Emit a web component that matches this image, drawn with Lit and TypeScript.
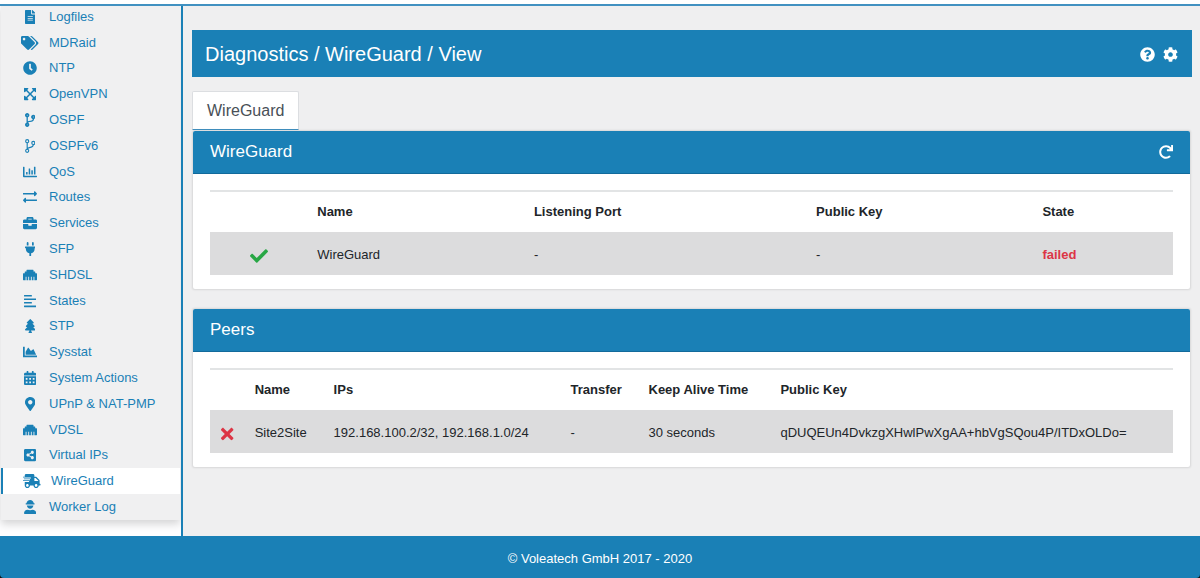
import { LitElement, html, svg, css } from "lit";
import { customElement, property } from "lit/decorators.js";
import { classMap } from "lit/directives/class-map.js";

type Icon = { w: number; d?: string; art?: unknown };

const ICONS: Record<string, Icon> = {
  file: {
    w: 384,
    d: "M224 136V0H24C10.7 0 0 10.7 0 24v464c0 13.3 10.7 24 24 24h336c13.3 0 24-10.7 24-24V160H248c-13.2 0-24-10.8-24-24zm64 236c0 6.6-5.4 12-12 12H108c-6.6 0-12-5.4-12-12v-8c0-6.6 5.4-12 12-12h168c6.6 0 12 5.4 12 12v8zm0-64c0 6.6-5.4 12-12 12H108c-6.6 0-12-5.4-12-12v-8c0-6.6 5.4-12 12-12h168c6.6 0 12 5.4 12 12v8zm0-72v8c0 6.6-5.4 12-12 12H108c-6.6 0-12-5.4-12-12v-8c0-6.6 5.4-12 12-12h168c6.6 0 12 5.4 12 12zm96-114.1v6.1H256V0h6.1c6.4 0 12.5 2.5 17 7l97.9 98c4.5 4.5 7 10.6 7 16.9z",
  },
  tags: {
    w: 640,
    d: "M497.941 225.941L286.059 14.059A48 48 0 0 0 252.118 0H48C21.49 0 0 21.49 0 48v204.118a48 48 0 0 0 14.059 33.941l211.882 211.882c18.744 18.745 49.136 18.746 67.882 0l204.118-204.118c18.745-18.745 18.745-49.137 0-67.882zM112 160c-26.51 0-48-21.49-48-48s21.49-48 48-48 48 21.49 48 48-21.49 48-48 48zm513.941 133.823L421.823 497.941c-18.745 18.745-49.137 18.745-67.882 0l-.36-.36L527.64 323.522c16.999-16.999 26.36-39.6 26.36-63.64s-9.362-46.641-26.36-63.64L331.397 0h48.721a48 48 0 0 1 33.941 14.059l211.882 211.882c18.745 18.745 18.745 49.137 0 67.882z",
  },
  clock: {
    w: 512,
    d: "M256,8C119,8,8,119,8,256S119,504,256,504,504,393,504,256,393,8,256,8Zm92.49,313h0l-20,25a16,16,0,0,1-22.49,2.5h0l-67-49.72a40,40,0,0,1-15-31.23V112a16,16,0,0,1,16-16h32a16,16,0,0,1,16,16V256l58,42.5A16,16,0,0,1,348.49,321Z",
  },
  expand: {
    w: 448,
    d: "M448 344v112a23.94 23.94 0 0 1-24 24H312c-21.39 0-32.09-25.9-17-41l36.2-36.2L224 295.6 116.77 402.9 153 439c15.09 15.1 4.39 41-17 41H24a23.94 23.94 0 0 1-24-24V344c0-21.4 25.89-32.1 41-17l36.19 36.2L184.46 256 77.18 148.7 41 185c-15.1 15.1-41 4.4-41-17V56a23.94 23.94 0 0 1 24-24h112c21.39 0 32.09 25.9 17 41l-36.2 36.2L224 216.4l107.23-107.3L295 73c-15.09-15.1-4.39-41 17-41h112a23.94 23.94 0 0 1 24 24v112c0 21.4-25.89 32.1-41 17l-36.19-36.2L263.54 256l107.28 107.3L407 327.1c15.1-15.2 41-4.5 41 16.9z",
  },
  branch: {
    w: 384,
    d: "M384 144c0-44.2-35.8-80-80-80s-80 35.8-80 80c0 36.4 24.3 67.1 57.5 76.8-.6 16.1-4.2 28.5-11 36.9-15.4 19.2-49.3 22.4-85.2 25.7-28.2 2.6-57.4 5.4-81.3 16.9v-144c32.5-10.2 56-40.5 56-76.3 0-44.2-35.8-80-80-80S0 35.8 0 80c0 35.8 23.5 66.1 56 76.3v199.3C23.5 365.9 0 396.2 0 432c0 44.2 35.8 80 80 80s80-35.8 80-80c0-34-21.2-63.1-51.2-74.6 3.1-5.2 7.8-9.8 14.9-13.4 16.2-8.2 40.4-10.4 66.1-12.8 42.2-3.9 90-8.4 118.2-43.4 14-17.4 21.1-39.8 21.6-67.9 31.6-10.8 54.4-40.7 54.4-75.9zM80 64c8.8 0 16 7.2 16 16s-7.2 16-16 16-16-7.2-16-16 7.2-16 16-16zm0 384c-8.8 0-16-7.2-16-16s7.2-16 16-16 16 7.2 16 16-7.2 16-16 16zm224-320c8.8 0 16 7.2 16 16s-7.2 16-16 16-16-7.2-16-16 7.2-16 16-16z",
  },
  branchLight: {
    w: 384,
    art: svg`<g fill="none" stroke="currentColor" stroke-width="42">
      <circle cx="80" cy="80" r="56"/><circle cx="80" cy="432" r="56"/><circle cx="304" cy="144" r="56"/>
      <path d="M80 140v232M304 204c0 120-110 85-180 125-25 14-40 30-44 50"/></g>`,
  },
  bars: {
    w: 512,
    art: svg`<path d="M16 64h24c9 0 16 7 16 16v312h440c9 0 16 7 16 16v24c0 9-7 16-16 16H32c-18 0-32-14-32-32V80c0-9 7-16 16-16z"/>
      <rect x="112" y="256" width="56" height="88" rx="10"/><rect x="208" y="128" width="56" height="216" rx="10"/>
      <rect x="304" y="192" width="56" height="152" rx="10"/><rect x="400" y="64" width="56" height="280" rx="10"/>`,
  },
  exchange: {
    w: 512,
    art: svg`<path d="M12 112h390V74c0-21 26-32 41-17l60 62c12 12 12 28 0 40l-60 62c-15 15-41 4-41-17v-36H12c-7 0-12-5-12-12v-32c0-7 5-12 12-12z"/>
      <path d="M500 344H110v-36c0-21-26-32-41-17L9 353c-12 12-12 28 0 40l60 62c15 15 41 4 41-17v-38h390c7 0 12-5 12-12v-32c0-7-5-12-12-12z"/>`,
  },
  briefcase: {
    w: 512,
    d: "M320 336c0 8.84-7.16 16-16 16h-96c-8.84 0-16-7.16-16-16v-48H0v144c0 25.6 22.4 48 48 48h416c25.6 0 48-22.4 48-48V288H320v48zm144-208h-80V80c0-25.6-22.4-48-48-48H176c-25.6 0-48 22.4-48 48v48H48c-25.6 0-48 22.4-48 48v80h512v-80c0-25.6-22.4-48-48-48zm-144 0H192V96h128v32z",
  },
  plug: {
    w: 384,
    d: "M320,32a32,32,0,0,0-64,0v96h64Zm48,128H16A16,16,0,0,0,0,176v32a16,16,0,0,0,16,16H32v32A160.07,160.07,0,0,0,160,412.8V512h64V412.8A160.07,160.07,0,0,0,352,256V224h16a16,16,0,0,0,16-16V176A16,16,0,0,0,368,160ZM128,32a32,32,0,0,0-64,0v96h64Z",
  },
  ethernet: {
    w: 512,
    d: "M496 192h-48v-48c0-8.8-7.2-16-16-16h-48V80c0-8.8-7.2-16-16-16H144c-8.8 0-16 7.2-16 16v48H80c-8.8 0-16 7.2-16 16v48H16c-8.8 0-16 7.2-16 16v224c0 8.8 7.2 16 16 16h80V320h32v128h64V320h32v128h64V320h32v128h64V320h32v128h80c8.8 0 16-7.2 16-16V208c0-8.8-7.2-16-16-16z",
  },
  lines: {
    w: 448,
    art: svg`<rect y="32" width="288" height="60" rx="14"/><rect y="161" width="448" height="60" rx="14"/>
      <rect y="290" width="288" height="60" rx="14"/><rect y="420" width="448" height="60" rx="14"/>`,
  },
  tree: {
    w: 384,
    d: "M378.31 378.49L298.42 288h30.63c9.01 0 16.98-5 20.78-13.06 3.8-8.04 2.55-17.26-3.28-24.05L268.42 160h28.89c9.1 0 17.3-5.35 20.86-13.61 3.52-8.13 1.86-17.59-4.24-24.08L203.66 4.83c-6.03-6.45-17.28-6.45-23.32 0L70.06 122.31c-6.1 6.49-7.75 15.95-4.24 24.08C69.38 154.65 77.59 160 86.69 160h28.89l-78.14 90.91c-5.81 6.78-7.06 15.99-3.27 24.04C37.97 283 45.93 288 54.95 288h30.63L5.69 378.49c-6 6.79-7.36 16.09-3.56 24.26 3.75 8.05 12 13.25 21.01 13.25H160v24.45l-30.29 48.4c-5.32 10.64 2.42 23.16 14.31 23.16h95.96c11.89 0 19.63-12.52 14.31-23.16L224 440.45V416h136.86c9.01 0 17.26-5.2 21.01-13.25 3.8-8.17 2.44-17.47-3.56-24.26z",
  },
  area: {
    w: 512,
    d: "M500 384c6.6 0 12 5.4 12 12v40c0 6.6-5.4 12-12 12H12c-6.6 0-12-5.4-12-12V76c0-6.6 5.4-12 12-12h40c6.6 0 12 5.4 12 12v308h436zM372.7 159.5L288 216l-85.3-113.7c-5.1-6.8-15.5-6.3-19.9 1L96 248v104h384l-89.9-187.8c-3.2-6.5-11.4-8.7-17.4-4.7z",
  },
  calendar: {
    w: 448,
    d: "M0 192h448v272c0 26.5-21.5 48-48 48H48c-26.5 0-48-21.5-48-48zM64 256v64h64v-64zM192 256v64h64v-64zM320 256v64h64v-64zM64 384v64h64v-64zM192 384v64h64v-64zM320 384v64h64v-64zM400 64h-48V16c0-8.8-7.2-16-16-16h-32c-8.8 0-16 7.2-16 16v48H160V16c0-8.8-7.2-16-16-16h-32c-8.8 0-16 7.2-16 16v48H48C21.5 64 0 85.5 0 112v48h448v-48c0-26.5-21.5-48-48-48z",
  },
  marker: {
    w: 384,
    d: "M172.268 501.67C26.97 291.031 0 269.413 0 192 0 85.961 85.961 0 192 0s192 85.961 192 192c0 77.413-26.97 99.031-172.268 309.67-9.535 13.774-29.93 13.773-39.464 0zM192 272c44.183 0 80-35.817 80-80s-35.817-80-80-80-80 35.817-80 80 35.817 80 80 80z",
  },
  share: {
    w: 448,
    d: "M448 80v352c0 26.51-21.49 48-48 48H48c-26.51 0-48-21.49-48-48V80c0-26.51 21.49-48 48-48h352c26.51 0 48 21.49 48 48zM304 296c-14.562 0-27.823 5.561-37.783 14.671l-67.958-40.775a56.339 56.339 0 0 0 0-27.793l67.958-40.775C276.177 210.439 289.438 216 304 216c30.928 0 56-25.072 56-56s-25.072-56-56-56-56 25.072-56 56c0 4.797.605 9.453 1.74 13.897l-67.958 40.775C171.823 205.561 158.562 200 144 200c-30.928 0-56 25.072-56 56s25.072 56 56 56c14.562 0 27.823-5.561 37.783-14.671l67.958 40.775a56.088 56.088 0 0 0-1.741 13.896c0 30.928 25.072 56 56 56s56-25.072 56-56c0-30.928-25.072-56-56-56z",
  },
  truck: {
    w: 640,
    d: "M624 352h-16V243.9c0-12.7-5.1-24.9-14.1-33.9L494 110.1c-9-9-21.2-14.1-33.9-14.1H416V48c0-26.5-21.5-48-48-48H112C85.5 0 64 21.5 64 48v48H8c-4.4 0-8 3.6-8 8v16c0 4.4 3.6 8 8 8h272c4.4 0 8 3.6 8 8v16c0 4.4-3.6 8-8 8H40c-4.4 0-8 3.6-8 8v16c0 4.4 3.6 8 8 8h208c4.4 0 8 3.6 8 8v16c0 4.4-3.6 8-8 8H8c-4.4 0-8 3.6-8 8v16c0 4.4 3.6 8 8 8h208c4.4 0 8 3.6 8 8v16c0 4.4-3.6 8-8 8H64v128c0 53 43 96 96 96s96-43 96-96h128c0 53 43 96 96 96s96-43 96-96h48c8.8 0 16-7.2 16-16v-32c0-8.8-7.2-16-16-16zM160 464c-26.5 0-48-21.5-48-48s21.5-48 48-48 48 21.5 48 48-21.5 48-48 48zm320 0c-26.5 0-48-21.5-48-48s21.5-48 48-48 48 21.5 48 48-21.5 48-48 48zm80-208H416V144h44.1l99.9 99.9V256z",
  },
  worker: {
    w: 448,
    art: svg`<path d="M92 116C98 50 152 0 224 0s126 50 132 116h16c9 0 14 6 14 14v22c0 8-5 14-14 14H76c-9 0-14-6-14-14v-22c0-8 5-14 14-14z"/>
      <path d="M104 204h240c-6 66-56 116-120 116s-114-50-120-116z"/>
      <path d="M318 356c74 2 130 56 130 130 0 14-12 26-26 26H26c-14 0-26-12-26-26 0-74 56-128 130-130 30 10 60 16 94 16s64-6 94-16z"/>`,
  },
  question: {
    w: 512,
    d: "M504 256c0 136.997-111.043 248-248 248S8 392.997 8 256C8 119.083 119.043 8 256 8s248 111.083 248 248zM262.655 90c-54.497 0-89.255 22.957-116.549 63.758-3.536 5.286-2.353 12.415 2.715 16.258l34.699 26.31c5.205 3.947 12.621 3.008 16.665-2.122 17.864-22.658 30.113-35.797 57.303-35.797 20.429 0 45.698 13.148 45.698 32.958 0 14.976-12.363 22.667-32.534 33.976C247.128 238.528 216 254.941 216 296v4c0 6.627 5.373 12 12 12h56c6.627 0 12-5.373 12-12v-1.333c0-28.462 83.186-29.647 83.186-106.667 0-58.002-60.165-102-116.531-102zM256 338c-25.365 0-46 20.635-46 46 0 25.364 20.635 46 46 46s46-20.636 46-46c0-25.365-20.635-46-46-46z",
  },
  cog: {
    w: 512,
    d: "M487.4 315.7l-42.6-24.6c4.3-23.2 4.3-47 0-70.2l42.6-24.6c4.9-2.8 7.1-8.6 5.5-14-11.1-35.6-30-67.8-54.7-94.6-3.8-4.1-10-5.1-14.8-2.3L380.8 110c-17.9-15.4-38.5-27.3-60.8-35.1V25.8c0-5.6-3.9-10.5-9.4-11.7-36.7-8.2-74.3-7.8-109.2 0-5.5 1.2-9.4 6.1-9.4 11.7V75c-22.2 7.9-42.8 19.8-60.8 35.1L88.7 85.5c-4.9-2.8-11-1.9-14.8 2.3-24.7 26.7-43.6 58.9-54.7 94.6-1.7 5.4.6 11.2 5.5 14L67.3 221c-4.3 23.2-4.3 47 0 70.2l-42.6 24.6c-4.9 2.8-7.1 8.6-5.5 14 11.1 35.6 30 67.8 54.7 94.6 3.8 4.1 10 5.1 14.8 2.3l42.6-24.6c17.9 15.4 38.5 27.3 60.8 35.1v49.2c0 5.6 3.9 10.5 9.4 11.7 36.7 8.2 74.3 7.8 109.2 0 5.5-1.2 9.4-6.1 9.4-11.7v-49.2c22.2-7.9 42.8-19.8 60.8-35.1l42.6 24.6c4.9 2.8 11 1.9 14.8-2.3 24.7-26.7 43.6-58.9 54.7-94.6 1.5-5.5-.7-11.3-5.6-14.1zM256 336c-44.1 0-80-35.9-80-80s35.9-80 80-80 80 35.9 80 80-35.9 80-80 80z",
  },
  redo: {
    w: 512,
    d: "M500.33 0h-47.41a12 12 0 0 0-12 12.57l4 82.76A247.42 247.42 0 0 0 256 8C119.34 8 7.9 119.53 8 256.19 8.1 393.07 119.1 504 256 504a247.1 247.1 0 0 0 166.18-63.91 12 12 0 0 0 .48-17.43l-34-34a12 12 0 0 0-16.38-.55A176 176 0 1 1 402.1 157.8l-101.53-4.87a12 12 0 0 0-12.57 12v47.41a12 12 0 0 0 12 12h200.33a12 12 0 0 0 12-12V12a12 12 0 0 0-12-12z",
  },
  check: {
    w: 512,
    d: "M173.898 439.404l-166.4-166.4c-9.997-9.997-9.997-26.206 0-36.204l36.203-36.204c9.997-9.998 26.207-9.998 36.204 0L192 312.69 432.095 72.596c9.997-9.997 26.207-9.997 36.204 0l36.203 36.204c9.997 9.997 9.997 26.206 0 36.204l-294.4 294.401c-9.998 9.997-26.207 9.997-36.204-.001z",
  },
  times: {
    w: 352,
    d: "M242.72 256l100.07-100.07c12.28-12.28 12.28-32.19 0-44.48l-22.24-22.24c-12.28-12.28-32.19-12.28-44.48 0L176 189.28 75.93 89.21c-12.28-12.28-32.19-12.28-44.48 0L9.21 111.45c-12.28 12.28-12.28 32.19 0 44.48L109.28 256 9.21 356.07c-12.28 12.28-12.28 32.19 0 44.48l22.24 22.24c12.28 12.28 32.2 12.28 44.48 0L176 322.72l100.07 100.07c12.28 12.28 32.2 12.28 44.48 0l22.24-22.24c12.28-12.28 12.28-32.19 0-44.48L242.72 256z",
  },
};

@customElement("ui-icon")
class UiIcon extends LitElement {
  @property() name = "file";

  static styles = css`
    :host {
      display: inline-flex;
      justify-content: center;
      height: 14px;
    }
    svg {
      display: block;
      height: 100%;
      width: auto;
      fill: currentColor;
      fill-rule: evenodd;
    }
  `;

  render() {
    const icon = ICONS[this.name];
    return html`<svg viewBox="0 0 ${icon.w} 512" aria-hidden="true">
      ${icon.art ?? svg`<path d=${icon.d ?? ""} />`}
    </svg>`;
  }
}

const MENU: { label: string; icon: string; active?: boolean }[] = [
  { label: "Logfiles", icon: "file" },
  { label: "MDRaid", icon: "tags" },
  { label: "NTP", icon: "clock" },
  { label: "OpenVPN", icon: "expand" },
  { label: "OSPF", icon: "branch" },
  { label: "OSPFv6", icon: "branchLight" },
  { label: "QoS", icon: "bars" },
  { label: "Routes", icon: "exchange" },
  { label: "Services", icon: "briefcase" },
  { label: "SFP", icon: "plug" },
  { label: "SHDSL", icon: "ethernet" },
  { label: "States", icon: "lines" },
  { label: "STP", icon: "tree" },
  { label: "Sysstat", icon: "area" },
  { label: "System Actions", icon: "calendar" },
  { label: "UPnP & NAT-PMP", icon: "marker" },
  { label: "VDSL", icon: "ethernet" },
  { label: "Virtual IPs", icon: "share" },
  { label: "WireGuard", icon: "truck", active: true },
  { label: "Worker Log", icon: "worker" },
];

@customElement("side-menu")
class SideMenu extends LitElement {
  static styles = css`
    :host {
      display: flex;
      flex-direction: column;
      box-sizing: border-box;
      overflow: hidden;
      padding: 0 1px 16px 1px;
      background: #fdfdfe;
      border-right: 2px solid #1a80b6;
    }
    nav {
      display: flex;
      flex-direction: column;
      flex: 1;
      margin-top: -2px;
      background: #f0f0f1;
      box-shadow: 0 4px 8px rgba(0, 0, 0, 0.16);
    }
    a {
      display: flex;
      flex: 1;
      align-items: center;
      gap: 9px;
      padding-left: 19px;
      color: #1a80b6;
      font-size: 13px;
      line-height: 20px;
      text-decoration: none;
    }
    a.active {
      background: #fff;
      border-left: 2px solid #1a80b6;
    }
    ui-icon {
      width: 20px;
    }
  `;

  render() {
    return html`<nav aria-label="Diagnostics">
      ${MENU.map(
        (item) => html`<a href="#" class=${classMap({ active: !!item.active })}
          ><ui-icon name=${item.icon}></ui-icon>${item.label}</a
        >`
      )}
    </nav>`;
  }
}

type Column = { title: string; width: number };

@customElement("data-panel")
class DataPanel extends LitElement {
  @property() heading = "";
  @property({ type: Boolean }) refreshable = false;
  @property({ attribute: false }) columns: Column[] = [];
  @property({ attribute: false }) rows: unknown[][] = [];

  static styles = css`
    :host {
      display: block;
      background: #fff;
      border-radius: 2px;
      box-shadow: 0 0 2px 1px rgba(0, 0, 0, 0.1);
    }
    .head {
      display: flex;
      align-items: center;
      justify-content: space-between;
      box-sizing: border-box;
      height: 43px;
      padding: 0 17px;
      background: #1a80b6;
      border-bottom: 1px solid #126a9b;
      border-radius: 2px 2px 0 0;
      color: #fff;
    }
    h2 {
      margin: 0;
      font-size: 17px;
      font-weight: 400;
      line-height: 24px;
    }
    button {
      display: flex;
      padding: 0;
      border: 0;
      background: none;
      color: inherit;
    }
    .body {
      padding: 16px 17px 14px;
    }
    table {
      width: 100%;
      table-layout: fixed;
      border-collapse: separate;
      border-spacing: 0;
      border-top: 2px solid #e2e4e5;
      color: #212529;
      font-size: 13px;
      line-height: 20px;
    }
    th,
    td {
      padding: 10px;
      text-align: left;
      white-space: nowrap;
    }
    td {
      padding-top: 13px;
      background: #dcdcdd;
    }
    td:first-child {
      text-align: center;
    }
    ui-icon {
      vertical-align: middle;
    }
    .ok,
    .bad {
      height: 18px;
      color: #28a745;
    }
    .bad,
    .failed {
      color: #dc3545;
    }
  `;

  render() {
    return html`
      <div class="head">
        <h2>${this.heading}</h2>
        ${this.refreshable
          ? html`<button type="button" aria-label="Refresh"><ui-icon name="redo"></ui-icon></button>`
          : null}
      </div>
      <div class="body">
        <table>
          <colgroup>
            ${this.columns.map((c) => html`<col style="width:${c.width}%" />`)}
          </colgroup>
          <thead>
            <tr>
              ${this.columns.map((c) => html`<th scope="col">${c.title}</th>`)}
            </tr>
          </thead>
          <tbody>
            ${this.rows.map((row) => html`<tr>${row.map((cell) => html`<td>${this.cell(cell)}</td>`)}</tr>`)}
          </tbody>
        </table>
      </div>
    `;
  }

  private cell(value: unknown) {
    if (value === true) return html`<ui-icon class="ok" name="check"></ui-icon>`;
    if (value === false) return html`<ui-icon class="bad" name="times"></ui-icon>`;
    if (value === "failed") return html`<strong class="failed">failed</strong>`;
    return value;
  }
}

const INTERFACE_COLUMNS: Column[] = [
  { title: "", width: 10.1 },
  { title: "Name", width: 22.5 },
  { title: "Listening Port", width: 29.3 },
  { title: "Public Key", width: 23.5 },
  { title: "State", width: 14.6 },
];
const INTERFACES = [[true, "WireGuard", "-", "-", "failed"]];

const PEER_COLUMNS: Column[] = [
  { title: "", width: 3.6 },
  { title: "Name", width: 8.2 },
  { title: "IPs", width: 24.6 },
  { title: "Transfer", width: 8.1 },
  { title: "Keep Alive Time", width: 13.7 },
  { title: "Public Key", width: 41.8 },
];
const PEERS = [
  [
    false,
    "Site2Site",
    "192.168.100.2/32, 192.168.1.0/24",
    "-",
    "30 seconds",
    "qDUQEUn4DvkzgXHwlPwXgAA+hbVgSQou4P/ITDxOLDo=",
  ],
];

@customElement("app-root")
class AppRoot extends LitElement {
  static styles = css`
    :host {
      display: flex;
      flex-direction: column;
      box-sizing: border-box;
      min-height: 100vh;
      padding-top: 4px;
      background: #fff;
      font-family: "Liberation Sans", Arial, sans-serif;
    }
    .page {
      display: grid;
      grid-template-columns: 183px minmax(0, 1fr);
      flex: 1;
      border-top: 2px solid #4191c1;
      background: #efeff0;
    }
    main {
      padding: 24px 8px 24px 9px;
    }
    .titlebar {
      display: flex;
      align-items: center;
      justify-content: space-between;
      box-sizing: border-box;
      height: 47px;
      padding: 0 14px 0 13px;
      background: #1a80b6;
      color: #fff;
    }
    h1 {
      margin: 0;
      font-size: 20px;
      font-weight: 400;
      line-height: 28px;
    }
    .actions {
      display: flex;
      gap: 8px;
      padding-top: 2px;
    }
    .actions button {
      display: flex;
      padding: 0;
      border: 0;
      background: none;
      color: inherit;
    }
    .actions ui-icon {
      height: 15px;
    }
    .tabs {
      display: flex;
      padding: 14px 0 1px;
    }
    .tab {
      box-sizing: border-box;
      height: 39px;
      padding: 0 14px;
      background: #fff;
      border: 1px solid #dcdee1;
      border-bottom-color: #4191c1;
      border-radius: 2px 2px 0 0;
      color: #495057;
      font-size: 16px;
      line-height: 37px;
      text-decoration: none;
    }
    .panels {
      display: flex;
      flex-direction: column;
      gap: 20px;
      padding: 0 2px 0 1px;
    }
    .foot {
      background: #111;
    }
    footer {
      padding: 13px 0 9px;
      background: #1a80b6;
      border-radius: 0 0 4px 4px;
      color: #fff;
      font-size: 13px;
      line-height: 20px;
      text-align: center;
    }
  `;

  render() {
    return html`
      <div class="page">
        <side-menu></side-menu>
        <main>
          <div class="titlebar">
            <h1>Diagnostics / WireGuard / View</h1>
            <div class="actions">
              <button type="button" aria-label="Help"><ui-icon name="question"></ui-icon></button>
              <button type="button" aria-label="Settings"><ui-icon name="cog"></ui-icon></button>
            </div>
          </div>
          <div class="tabs"><a class="tab" href="#">WireGuard</a></div>
          <div class="panels">
            <data-panel heading="WireGuard" refreshable .columns=${INTERFACE_COLUMNS} .rows=${INTERFACES}></data-panel>
            <data-panel heading="Peers" .columns=${PEER_COLUMNS} .rows=${PEERS}></data-panel>
          </div>
        </main>
      </div>
      <div class="foot"><footer>© Voleatech GmbH 2017 - 2020</footer></div>
    `;
  }
}
